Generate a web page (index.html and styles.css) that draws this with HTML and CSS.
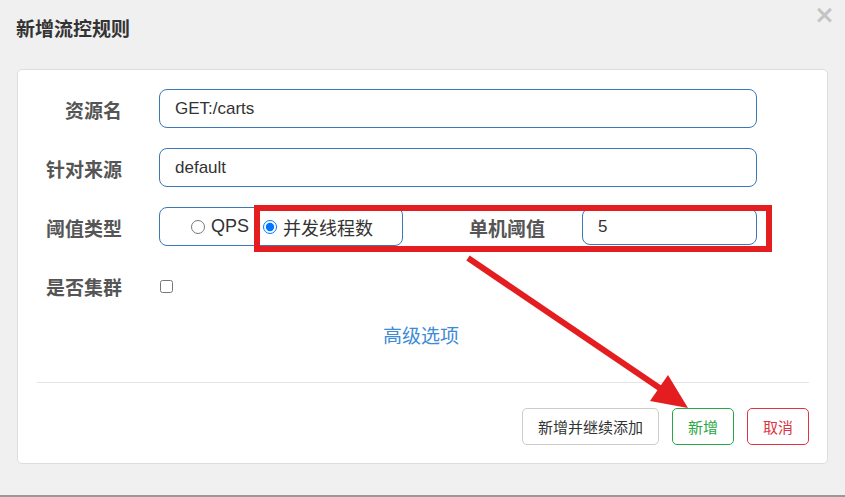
FILE: index.html
```html
<!DOCTYPE html>
<html lang="zh-CN">
<head>
  <meta charset="UTF-8" />
  <title>新增流控规则</title>
  <meta name="viewport" content="width=device-width, initial-scale=1.0" />
  <link rel="stylesheet" href="styles.css">
</head>
<body>
  <div class="dialog">
    <div class="dialog-header">
      <h3 class="dialog-title">新增流控规则</h3>
      <span class="close">&times;</span>
    </div>

    <div class="card">
      <div class="form">
        <div class="form-row">
          <label class="form-label">资源名</label>
          <input class="form-input" type="text" value="GET:/carts" />
        </div>

        <div class="form-row">
          <label class="form-label">针对来源</label>
          <input class="form-input" type="text" value="default" />
        </div>

        <div class="form-row">
          <label class="form-label">阈值类型</label>
          <div class="radio-group">
            <label class="radio"><input type="radio" name="grade" /> QPS</label>
            <label class="radio"><input type="radio" name="grade" checked /> 并发线程数</label>
          </div>
          <label class="form-label inline-label">单机阈值</label>
          <input class="form-input count-input" type="text" value="5" />
        </div>

        <div class="form-row">
          <label class="form-label">是否集群</label>
          <input class="check" type="checkbox" />
        </div>

        <div class="advanced"><a href="#">高级选项</a></div>
      </div>

      <div class="footer">
        <button class="btn btn-default">新增并继续添加</button>
        <button class="btn btn-success">新增</button>
        <button class="btn btn-danger">取消</button>
      </div>
    </div>
  </div>

  <!-- annotation drawn over the screenshot -->
  <svg class="markup" width="845" height="497" viewBox="0 0 845 497">
    <rect x="257" y="208" width="512" height="41" fill="none" stroke="#e41e20" stroke-width="6" />
    <line x1="468" y1="258" x2="664" y2="391" stroke="#e41e20" stroke-width="6" />
    <polygon points="688,408 650,401 668,375" fill="#e41e20" />
  </svg>
</body>
</html>
```

FILE: styles.css
```css
body {
  margin: 0;
  font-family: 'Liberation Sans', 'Noto Sans CJK SC', sans-serif;
  background-color: #f0f0f0;
}

.dialog {
  height: 497px;
  box-sizing: border-box;
  border-bottom: 2px solid #999;
}

.dialog-header {
  height: 69px;
  display: flex;
  justify-content: space-between;
  align-items: flex-start;
  padding: 0 10px 0 16px;
  box-sizing: border-box;
}

.dialog-title {
  margin: 14px 0 0;
  font-size: 19px;
  line-height: 28px;
  font-weight: bold;
  color: #333;
  font-family: 'Noto Sans CJK SC', sans-serif;
}

.close {
  margin-top: 1px;
  font-size: 25px;
  line-height: 28px;
  font-weight: bold;
  color: #c4c4c4;
  font-family: 'DejaVu Sans', sans-serif;
}

.card {
  margin: 0 17px;
  height: 395px;
  box-sizing: border-box;
  background-color: #fff;
  border: 1px solid #ddd;
  border-radius: 5px;
  padding-top: 19px;
}

.form {
  display: flex;
  flex-direction: column;
  gap: 20px;
}

.form-row {
  display: flex;
  align-items: center;
  height: 39px;
}

.form-label {
  width: 104px;
  margin-right: 37px;
  text-align: right;
  font-size: 19px;
  font-weight: bold;
  color: #555;
  padding-top: 2px;
  font-family: 'Noto Sans CJK SC', sans-serif;
}

.form-input {
  width: 598px;
  height: 39px;
  box-sizing: border-box;
  border: 1px solid #3a78b8;
  border-radius: 8px;
  padding: 0 15px;
  font-size: 17px;
  color: #333;
  font-family: 'Liberation Sans', 'Noto Sans CJK SC', sans-serif;
  outline: none;
}

.radio-group {
  width: 244px;
  height: 39px;
  box-sizing: border-box;
  border: 1px solid #3a78b8;
  border-radius: 8px;
  display: flex;
  align-items: center;
  gap: 14px;
  padding-left: 31px;
  font-size: 18px;
  color: #333;
}

.radio {
  display: flex;
  align-items: center;
  gap: 4px;
}

.radio input {
  margin: 0 2px 0 0;
  width: 14px;
  height: 14px;
}

.inline-label {
  width: 77px;
  margin: 0 37px 0 65px;
}

.count-input {
  width: 175px;
  height: 37px;
}

.check {
  width: 13px;
  height: 13px;
  margin: 2px 0 0 1px;
}

.advanced {
  text-align: center;
  height: 20px;
  line-height: 20px;
  padding-right: 3px;
}

.advanced a {
  font-size: 19px;
  color: #3d8bd4;
  text-decoration: none;
  font-family: 'Noto Sans CJK SC', sans-serif;
}

.footer {
  margin: 37px 18px 0 19px;
  border-top: 1px solid #e5e5e5;
  padding-top: 25px;
  display: flex;
  justify-content: flex-end;
  gap: 13px;
}

.btn {
  height: 37px;
  padding: 0 15px;
  background-color: #fff;
  border: 1px solid #ccc;
  border-radius: 5px;
  font-size: 15px;
  color: #333;
  font-family: 'Noto Sans CJK SC', sans-serif;
  cursor: pointer;
}

.btn-success {
  border-color: #28a745;
  color: #28a745;
}

.btn-danger {
  border-color: #dc3545;
  color: #dc3545;
}

.markup {
  position: absolute;
  top: 0;
  left: 0;
  pointer-events: none;
}
```
